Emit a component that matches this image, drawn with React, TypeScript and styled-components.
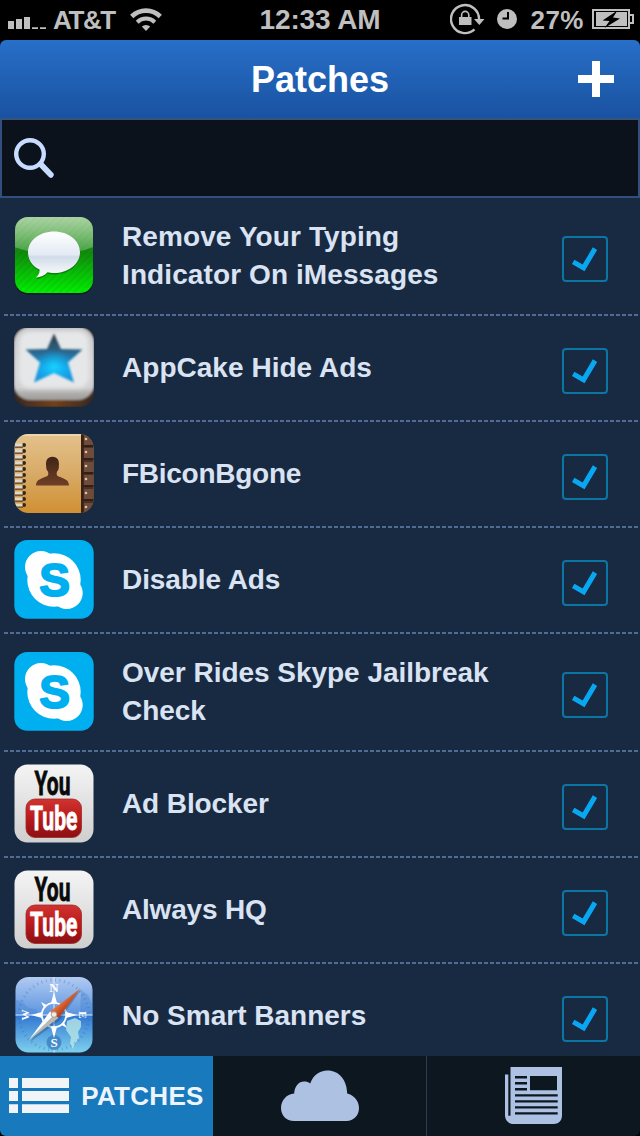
import React, { useState } from "react"
import styled, { createGlobalStyle } from "styled-components"

const GlobalStyle = createGlobalStyle`
  * {
    box-sizing: border-box;
  }
  body {
    margin: 0;
    background: #000000;
    font-family: "Liberation Sans", Arial, sans-serif;
  }
  svg {
    display: block;
    flex: none;
  }
`

const Screen = styled.div`
  display: flex;
  flex-direction: column;
  width: 640px;
  height: 1136px;
  overflow: hidden;
  background: #000000;
`

const StatusBar = styled.div`
  display: grid;
  grid-template-columns: 1fr auto 1fr;
  height: 40px;
  flex: none;
  color: #bfbfbf;
`

const StatusGroup = styled.div<{ $end?: boolean }>`
  display: flex;
  align-items: flex-start;
  justify-content: ${({ $end }) => ($end ? "flex-end" : "flex-start")};
  padding: ${({ $end }) => ($end ? "0 6px 0 0" : "0 0 0 8px")};
`

const StatusText = styled.span<{ $size: number; $spacing?: number }>`
  font-size: ${({ $size }) => $size}px;
  letter-spacing: ${({ $spacing }) => $spacing ?? 0}px;
  line-height: 40px;
  font-weight: bold;
  white-space: nowrap;
`

const Carrier = styled(StatusText)`
  width: 63px;
  margin: 0 14px 0 7px;
`

const AlarmGap = styled.div`
  margin-left: 12px;
`

const Percent = styled(StatusText)`
  margin: 0 8px 0 13px;
`

const Header = styled.header`
  display: grid;
  grid-template-columns: 1fr auto 1fr;
  align-items: center;
  flex: none;
  height: 80px;
  padding: 0 26px;
  border-bottom: 2px solid #35547f;
  border-radius: 6px 6px 0 0;
  background: linear-gradient(#276fc8, #1a52a1);
`

const Title = styled.h1`
  grid-column: 2;
  margin: 0;
  padding-top: 2px;
  color: #ffffff;
  font-size: 36px;
  line-height: 40px;
`

const AddButton = styled.button`
  justify-self: end;
  padding: 0;
  border: 0;
  background: none;
`

const SearchBar = styled.div`
  flex: none;
  height: 78px;
  padding: 17px 0 0 11px;
  border: 2px solid #304f7c;
  border-top: 0;
  background: #0b121b;
`

const PatchList = styled.ul`
  flex: 1;
  min-height: 0;
  margin: 0;
  padding: 0;
  overflow: hidden;
  list-style: none;
  background: #182942;
`

const PatchRow = styled.li<{ $tall?: boolean }>`
  display: flex;
  align-items: center;
  height: ${({ $tall }) => ($tall ? 118 : 106)}px;
  padding: 0 32px 2px 14px;
  background: repeating-linear-gradient(
      90deg,
      #526b94 0 4px,
      transparent 4px 6px
    )
    4px 100% / 634px 2px no-repeat;
`

const PatchName = styled.span<{ $spacing?: number }>`
  width: 400px;
  margin-left: 28px;
  color: #dae3f2;
  font-size: 28px;
  font-weight: bold;
  letter-spacing: ${({ $spacing }) => $spacing ?? 0}px;
  line-height: 38px;
`

const Checkbox = styled.button`
  display: flex;
  width: 46px;
  height: 46px;
  margin: 6px 0 0 auto;
  padding: 0;
  border: 2px solid #0b75a3;
  border-radius: 4px;
  background: none;
`

const TabBar = styled.nav`
  display: flex;
  flex: none;
  height: 80px;
  border-radius: 0 0 6px 6px;
  overflow: hidden;
  background: #0d1720;
`

const Tab = styled.div<{ $active?: boolean; $divided?: boolean }>`
  display: flex;
  flex: 1;
  align-items: center;
  justify-content: center;
  gap: 12px;
  border-right: ${({ $divided }) => ($divided ? "1px solid #2b3b53" : "0")};
  background: ${({ $active }) => ($active ? "#187abd" : "transparent")};
`

const TabLabel = styled.span`
  color: #eef4fb;
  font-size: 26px;
  font-weight: bold;
  letter-spacing: 0.3px;
`

const SignalIcon = () => (
  <svg width="38" height="40" fill="#bfbfbf">
    <path d="M0 21h6v8H0zM8 19h6v10H8zM16 17h6v12h-6zM24 27.3h6V29h-6zM32 27.3h6V29h-6z" />
  </svg>
)

const WifiIcon = () => (
  <svg width="32" height="40" viewBox="0 0 32 40" fill="none" stroke="#bfbfbf">
    <path d="M1.700 16.500a20.300 20.300 0 0 1 28.600 0" strokeWidth="4.600" />
    <path d="M7.200 22.200a12.600 12.600 0 0 1 17.600 0" strokeWidth="4" />
    <path d="M16 31l-4.200-4.400a6 6 0 0 1 8.400 0z" fill="#bfbfbf" stroke="none" />
  </svg>
)

const RotationLockIcon = () => (
  <svg width="35" height="40" viewBox="0 0 35 40" fill="none" stroke="#bfbfbf">
    <path d="M24.500 29.400A14 14 0 1 1 29 19.500" strokeWidth="2.400" />
    <path d="M24 19h10.500l-5.200 6z" fill="#bfbfbf" stroke="none" />
    <path d="M9 17h12.500v8H9z" fill="#bfbfbf" stroke="none" />
    <path d="M11.600 18v-3a3.600 3.600 0 0 1 7.200 0v3" strokeWidth="1.600" />
  </svg>
)

const AlarmIcon = () => (
  <svg width="20" height="40" viewBox="0 0 20 40">
    <circle cx="10" cy="19" r="10" fill="#bfbfbf" />
    <path d="M11 12v6.500H5.500" fill="none" stroke="#000000" strokeWidth="2" />
  </svg>
)

const BatteryIcon = () => (
  <svg width="42" height="40" viewBox="0 0 42 40">
    <path
      d="M1 10h36v18H1zM38 15h3v8h-3"
      fill="none"
      stroke="#bfbfbf"
      strokeWidth="2"
    />
    <path d="M4 12h31v14H4z" fill="#bfbfbf" />
    <path d="M25.500 10.500L10.500 20.500l7 .5-5 7 15.500-9.500-7-1z" fill="#000000" />
  </svg>
)

const PlusIcon = () => (
  <svg width="36" height="36" fill="#ffffff">
    <path d="M14 0h8v14h14v8H22v14h-8V22H0v-8h14z" />
  </svg>
)

const SearchIcon = () => (
  <svg width="44" height="42" viewBox="0 0 44 42" fill="none" stroke="#c8dcff">
    <circle cx="17" cy="17" r="13.800" strokeWidth="4.400" />
    <path d="M27.500 27L37.800 37.800" strokeWidth="5.800" strokeLinecap="round" />
  </svg>
)

const CheckIcon = () => (
  <svg width="42" height="42" viewBox="0 0 42 42">
    <path
      d="M9.200 23.800L19.600 29.800 31 10.600"
      fill="none"
      stroke="#09a7f2"
      strokeWidth="5"
    />
  </svg>
)

const MessagesIcon = () => (
  <svg width="80" height="80" viewBox="0 0 80 80">
    <defs>
      <linearGradient id="msgBase" x1="0" y1="0" x2="0" y2="1">
        <stop offset="0" stopColor="#5bab4b" />
        <stop offset="0.45" stopColor="#118a0c" />
        <stop offset="1" stopColor="#00f800" />
      </linearGradient>
      <linearGradient id="msgShine" x1="0" y1="0" x2="0" y2="1">
        <stop offset="0" stopColor="#ffffff" stopOpacity="0.5" />
        <stop offset="1" stopColor="#ffffff" stopOpacity="0.2" />
      </linearGradient>
      <linearGradient id="msgBubble" x1="0" y1="0" x2="0" y2="1">
        <stop offset="0" stopColor="#ffffff" />
        <stop offset="0.5" stopColor="#e3eaf3" />
        <stop offset="0.55" stopColor="#d0dce9" />
        <stop offset="1" stopColor="#ffffff" />
      </linearGradient>
      <pattern
        id="msgStripes"
        width="5"
        height="5"
        patternUnits="userSpaceOnUse"
        patternTransform="rotate(45)"
      >
        <path d="M0 0h2.500v5H0z" fill="#003c00" fillOpacity="0.080" />
      </pattern>
      <clipPath id="msgClip">
        <rect x="1" y="1" width="78" height="76" rx="13" />
      </clipPath>
    </defs>
    <rect x="1" y="2" width="78" height="76.500" rx="13" fill="#0b1a22" />
    <g clipPath="url(#msgClip)">
      <path d="M0 0h80v80H0z" fill="url(#msgBase)" />
      <path d="M0 0h80v80H0z" fill="url(#msgStripes)" />
      <path d="M0 0h80v31Q40 46 0 31z" fill="url(#msgShine)" />
    </g>
    <path
      d="M40 16.500c14.500 0 26 9 26 21s-11.500 21-26 21c-2.500 0-4.500-.3-6.500-.7-3 3.200-7 5.200-11.500 5.200 2.700-2.300 3.800-5 3.500-8C18 51 14 44.800 14 37.500c0-12 11.500-21 26-21z"
      fill="#064d08"
      fillOpacity="0.500"
    />
    <path
      d="M40 15.500c14.500 0 26 9 26 20.800s-11.500 20.700-26 20.700c-2.500 0-4.500-.3-6.500-.7-3 3.200-7 5.200-11.500 5.200 2.700-2.300 3.800-5 3.500-8C18 50 14 43.500 14 36.300c0-11.800 11.500-20.800 26-20.800z"
      fill="url(#msgBubble)"
    />
  </svg>
)

const AppCakeIcon = () => (
  <svg width="80" height="80" viewBox="0 0 80 80">
    <defs>
      <linearGradient id="cakeStar" x1="0" y1="0" x2="0" y2="1">
        <stop offset="0" stopColor="#2f3a40" />
        <stop offset="0.350" stopColor="#2c6286" />
        <stop offset="0.700" stopColor="#159fe6" />
        <stop offset="1" stopColor="#1f93d8" />
      </linearGradient>
      <radialGradient id="cakeGlow" cx="0.500" cy="0.680" r="0.350">
        <stop offset="0" stopColor="#12d4ff" />
        <stop offset="1" stopColor="#12b8ff" stopOpacity="0" />
      </radialGradient>
      <linearGradient id="cakeFace" x1="0" y1="0" x2="0" y2="1">
        <stop offset="0" stopColor="#c6c6c7" />
        <stop offset="0.500" stopColor="#d6d6d8" />
        <stop offset="0.830" stopColor="#d2d2d2" />
        <stop offset="0.900" stopColor="#b2b1b0" />
        <stop offset="1" stopColor="#9d9b99" />
      </linearGradient>
      <linearGradient id="cakeBase" x1="0" y1="0" x2="1" y2="0">
        <stop offset="0" stopColor="#38271f" />
        <stop offset="0.500" stopColor="#744117" />
        <stop offset="1" stopColor="#38271f" />
      </linearGradient>
      <filter id="cakeSoft">
        <feGaussianBlur stdDeviation="0.900" />
      </filter>
      <filter id="cakeSofter">
        <feGaussianBlur stdDeviation="2" />
      </filter>
      <clipPath id="cakeClip">
        <rect width="80" height="79" rx="11" />
      </clipPath>
    </defs>
    <g clipPath="url(#cakeClip)">
      <g filter="url(#cakeSoft)">
        <rect x="-1" y="-4" width="82" height="83" rx="17" fill="url(#cakeBase)" />
        <rect x="0" y="-1" width="80" height="73" rx="16" fill="url(#cakeFace)" />
      </g>
      <rect
        x="5"
        y="3"
        width="70"
        height="57"
        rx="11"
        fill="#e6e7e9"
        filter="url(#cakeSofter)"
      />
      <g filter="url(#cakeSoft)">
        <path
          d="M40 5.500l7 15.500 21.500.5-14.500 13 6 20-20-9.500-20 9.500 6-20-14.500-13 21.500-.5z"
          fill="url(#cakeStar)"
        />
        <path
          d="M40 5.500l7 15.500 21.500.5-14.500 13 6 20-20-9.500-20 9.500 6-20-14.500-13 21.500-.5z"
          fill="url(#cakeGlow)"
        />
      </g>
    </g>
  </svg>
)

const ContactsIcon = () => (
  <svg width="80" height="80" viewBox="0 0 80 80">
    <defs>
      <linearGradient id="bookCover" x1="0" y1="0" x2="0" y2="1">
        <stop offset="0" stopColor="#e3c28c" />
        <stop offset="0.500" stopColor="#d8aa66" />
        <stop offset="1" stopColor="#d08f31" />
      </linearGradient>
      <linearGradient id="bookPerson" x1="0" y1="0" x2="0" y2="1">
        <stop offset="0" stopColor="#3f2517" />
        <stop offset="1" stopColor="#6f3f25" />
      </linearGradient>
      <clipPath id="bookClip">
        <rect x="0.500" y="0" width="79" height="79" rx="14" />
      </clipPath>
    </defs>
    <g clipPath="url(#bookClip)">
      <path d="M0 0h80v80H0z" fill="url(#bookCover)" />
      <path d="M1 1h67" stroke="#f1dcb6" strokeWidth="1.500" />
      <path d="M68 0h12v80H68z" fill="#4d3023" />
      <path d="M67 0h2.500v80H67z" fill="#382114" />
      {[0, 13, 27, 40, 54, 68].map((y) => (
        <g key={y}>
          <path d={`M70 ${y + 1}h9v10h-9z`} fill="#6f4c3a" />
          <path d={`M69 ${y + 11}h11v2H69z`} fill="#302019" />
          <circle cx="72" cy={y + 5} r="1.300" fill="#d5c2ae" />
        </g>
      ))}
      {[10, 16, 22, 28, 34, 40, 46, 52, 58, 64, 70].map((y) => (
        <g key={y}>
          <circle cx="10" cy={y + 1} r="2" fill="#33261a" />
          <path d={`M1 ${y - 0.5}h7.500v3H1z`} fill="#dcd8cf" />
          <path d={`M1 ${y + 2.5}h8v1.500H1z`} fill="#76572f" />
        </g>
      ))}
    </g>
    <path
      d="M22 51.500c.3-5.500 3-6 11-9.300 1.500-.7 1.600-2.200 1-4.700-1.500-1.200-2-3.500-1.800-5-1-6 1.500-9.700 6.300-9.700s7.300 3.700 6.300 9.700c.2 1.500-.3 3.800-1.800 5-.6 2.500-.5 4 1 4.700 8 3.300 10.700 3.800 11 9.300z"
      fill="url(#bookPerson)"
    />
  </svg>
)

const SkypeIcon = () => (
  <svg width="80" height="80" viewBox="0 0 80 80">
    <rect x="0.300" width="79.400" height="78.700" rx="13" fill="#00aff0" />
    <g fill="#ffffff">
      <circle cx="40" cy="40" r="26.700" />
      <circle cx="27" cy="27" r="16" />
      <circle cx="52.700" cy="53" r="16" />
    </g>
    <text
      x="40.500"
      y="56"
      fontFamily="Liberation Sans, sans-serif"
      fontWeight="bold"
      fontSize="46"
      textAnchor="middle"
      fill="#00aff0"
      stroke="#00aff0"
      strokeWidth="2"
      strokeLinejoin="round"
    >
      S
    </text>
  </svg>
)

const YouTubeIcon = () => (
  <svg width="80" height="80" viewBox="0 0 80 80">
    <defs>
      <linearGradient id="tubeTile" x1="0" y1="0" x2="0" y2="1">
        <stop offset="0" stopColor="#f4f4f4" />
        <stop offset="1" stopColor="#cfcfcf" />
      </linearGradient>
      <linearGradient id="tubeRed" x1="0" y1="0" x2="0" y2="1">
        <stop offset="0" stopColor="#cf3430" />
        <stop offset="0.500" stopColor="#b91a1c" />
        <stop offset="1" stopColor="#8b1013" />
      </linearGradient>
    </defs>
    <rect x="0.500" y="0.500" width="79" height="78" rx="13" fill="url(#tubeTile)" />
    <rect
      x="12"
      y="35"
      width="55.500"
      height="38.500"
      rx="9"
      fill="url(#tubeRed)"
      stroke="#a12a28"
      strokeWidth="0.800"
    />
    <g fontFamily="Roboto, sans-serif" fontWeight="bold" strokeWidth="0.800">
      <text
        transform="translate(20.500 30.500) scale(0.580 1)"
        fontSize="33"
        textLength="62"
        lengthAdjust="spacingAndGlyphs"
        fill="#0a0a0a"
        stroke="#0a0a0a"
      >
        You
      </text>
      <text
        transform="translate(16 66.300) scale(0.600 1)"
        fontSize="33"
        textLength="79"
        lengthAdjust="spacingAndGlyphs"
        fill="#ffffff"
        stroke="#ffffff"
      >
        Tube
      </text>
    </g>
  </svg>
)

const SafariIcon = () => (
  <svg width="80" height="80" viewBox="0 0 80 80">
    <defs>
      <linearGradient id="safSky" x1="0" y1="0" x2="0" y2="1">
        <stop offset="0" stopColor="#b4ccf2" />
        <stop offset="0.480" stopColor="#5c95e0" />
        <stop offset="0.500" stopColor="#3379d2" />
        <stop offset="1" stopColor="#86d8f0" />
      </linearGradient>
      <linearGradient id="safRed" x1="0" y1="0" x2="1" y2="1">
        <stop offset="0.400" stopColor="#e67544" />
        <stop offset="0.600" stopColor="#ba4418" />
      </linearGradient>
      <clipPath id="safClip">
        <rect x="1.500" y="1" width="77" height="75.500" rx="13" />
      </clipPath>
    </defs>
    <rect x="1" y="1" width="78" height="77" rx="13.500" fill="#14314e" />
    <g clipPath="url(#safClip)">
      <path d="M0 0h80v80H0z" fill="url(#safSky)" />
      <path
        d="M0 24q9 0 12 6 7 4 11 3v5H0zM67 14l7 5 5 11v8H66z"
        fill="#4c86d3"
        fillOpacity="0.400"
      />
      <path
        d="M53 45l8-3 6 3v6l-3 5 1 6-5 7-1 4-3-5 1-7-5-7z"
        fill="#b6e6e6"
        fillOpacity="0.800"
      />
      <circle
        cx="40"
        cy="39"
        r="35"
        fill="none"
        stroke="#2c67ae"
        strokeWidth="3"
        strokeDasharray="1 3.600"
        strokeOpacity="0.350"
      />
      <path d="M40 0v78M1 39h78" stroke="#e4f1fb" strokeWidth="0.900" />
      <circle cx="40" cy="66.500" r="7.500" fill="#397fc3" fillOpacity="0.800" />
      <circle
        cx="40"
        cy="39"
        r="12.200"
        fill="none"
        stroke="#ffffff"
        strokeWidth="1.800"
      />
      <path
        d="M40 16l3 11h-6zM40 62l3-11h-6zM17 39l11-3v6zM63 39l-11-3v6zM27 26l5.500 3-2.500 2.500zM53 52l-5.500-3 2.500-2.500z"
        fill="#ffffff"
      />
      <g
        fontFamily="Liberation Serif, serif"
        fontSize="13"
        fontWeight="bold"
        fill="#ffffff"
        textAnchor="middle"
      >
        <text x="40" y="15.500">N</text>
        <text x="40" y="71">S</text>
        <text transform="translate(11 39) rotate(-90)" x="0" y="4" fontSize="11">
          W
        </text>
        <text transform="translate(69 39) rotate(90)" x="0" y="4" fontSize="11">
          E
        </text>
      </g>
    </g>
    <path d="M67 14L45 45l-29 21 20-28z" fill="#1c4677" fillOpacity="0.350" />
    <path d="M66.500 12.500L44.500 42 36 35.500z" fill="url(#safRed)" />
    <path d="M14.500 64.500L36 35.500 40.500 39z" fill="#fbfbfb" />
    <path d="M14.500 64.500L44.500 42 40.500 39z" fill="#bdb8b3" />
    <circle cx="40" cy="38.500" r="2.800" fill="#f1ece8" stroke="#b19a8c" />
  </svg>
)

const ListIcon = () => (
  <svg width="60" height="36" fill="#f2f5f8">
    <path d="M0 0h9v10H0zM13 0h47v10H13zM0 13h9v10H0zM13 13h47v10H13zM0 26.300h9V35H0zM13 26.300h47V35H13z" />
  </svg>
)

const CloudIcon = () => (
  <svg width="78" height="52" viewBox="0 0 78 52" fill="#adc1e3">
    <path d="M13 51C5 51 0 45 0 38c0-7.500 5.500-14 13.200-14.500C13.500 16 18 11.500 23 11.500c2.500 0 4.500.6 6.200 2C32 5.500 38.500.5 46.500.5 58 .5 66 10 66.200 23.500 73 25 78 31 78 38c0 7.500-5.500 13-12.500 13z" />
  </svg>
)

const NewsIcon = () => (
  <svg width="57" height="58" viewBox="0 0 57 58">
    <path
      d="M5.500 0H57v48.500c0 5-3.500 8.500-8.500 8.500h-40C3.500 57 0 53.500 0 48.500v-41h3.300v41.200h2.200z"
      fill="#adc1e3"
    />
    <path
      d="M10 9h12v2.400H10zM10 15h12v2.400H10zM10 21h12v2.400H10zM25 9h27v14.300H25zM10 27.200h42.700v2.400H10zM10 33.200h42.700v2.400H10zM10 39.200h42.700v2.400H10zM10 45.200h42.700v2.400H10z"
      fill="#0d1720"
    />
  </svg>
)

const patches = [
  {
    name: "Remove Your Typing Indicator On iMessages",
    icon: <MessagesIcon />,
    tall: true,
    spacing: 0.1,
  },
  { name: "AppCake Hide Ads", icon: <AppCakeIcon />, spacing: 0.03 },
  { name: "FBiconBgone", icon: <ContactsIcon />, spacing: -0.27 },
  { name: "Disable Ads", icon: <SkypeIcon />, spacing: -0.08 },
  {
    name: "Over Rides Skype Jailbreak Check",
    icon: <SkypeIcon />,
    tall: true,
    spacing: -0.03,
  },
  { name: "Ad Blocker", icon: <YouTubeIcon />, spacing: -0.1 },
  { name: "Always HQ", icon: <YouTubeIcon />, spacing: -0.2 },
  { name: "No Smart Banners", icon: <SafariIcon /> },
]

const App: React.FC = () => {
  const [enabled, setEnabled] = useState<boolean[]>(patches.map(() => true))

  const toggle = (index: number) => {
    setEnabled((prev) => prev.map((on, i) => (i === index ? !on : on)))
  }

  return (
    <>
      <GlobalStyle />
      <Screen>
        <StatusBar>
          <StatusGroup>
            <SignalIcon />
            <Carrier $size={26} $spacing={-1.4}>
              AT&amp;T
            </Carrier>
            <WifiIcon />
          </StatusGroup>
          <StatusText $size={28} $spacing={-0.1}>
            12:33 AM
          </StatusText>
          <StatusGroup $end>
            <RotationLockIcon />
            <AlarmGap>
              <AlarmIcon />
            </AlarmGap>
            <Percent $size={26} $spacing={0.5}>
              27%
            </Percent>
            <BatteryIcon />
          </StatusGroup>
        </StatusBar>
        <Header>
          <Title>Patches</Title>
          <AddButton>
            <PlusIcon />
          </AddButton>
        </Header>
        <SearchBar>
          <SearchIcon />
        </SearchBar>
        <PatchList>
          {patches.map((patch, index) => (
            <PatchRow key={index} $tall={patch.tall}>
              {patch.icon}
              <PatchName $spacing={patch.spacing}>{patch.name}</PatchName>
              <Checkbox onClick={() => toggle(index)}>
                {enabled[index] && <CheckIcon />}
              </Checkbox>
            </PatchRow>
          ))}
        </PatchList>
        <TabBar>
          <Tab $active>
            <ListIcon />
            <TabLabel>PATCHES</TabLabel>
          </Tab>
          <Tab $divided>
            <CloudIcon />
          </Tab>
          <Tab>
            <NewsIcon />
          </Tab>
        </TabBar>
      </Screen>
    </>
  )
}

export default App
